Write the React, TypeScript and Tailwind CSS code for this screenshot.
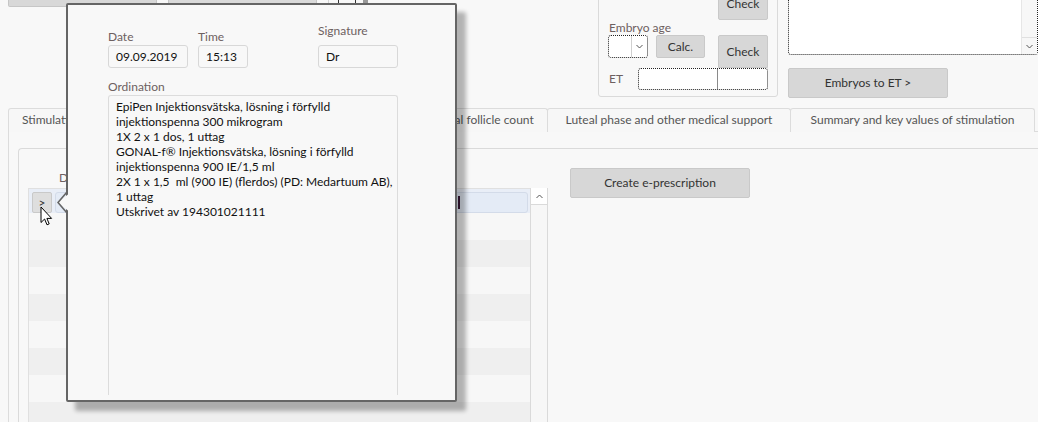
import React from "react";

const btn =
  "flex items-center justify-center bg-[#d7d7d7] border border-[#c9c9c9] rounded-[2px] text-[12px] text-[#333]";
const label = "text-[12px] text-[#6d6060] leading-[16px]";
const field =
  "h-[23px] border border-[#d8d8d8] rounded-[3px] pl-[7px] text-[12px] leading-[21px] text-[#111]";

function Chevron({ up = false }: { up?: boolean }) {
  return (
    <svg width="7" height="5" viewBox="0 0 7 5" className="text-[#555]">
      <polyline
        points={up ? "0.5,4 3.5,1 6.5,4" : "0.5,1 3.5,4 6.5,1"}
        fill="none"
        stroke="currentColor"
        strokeWidth="1"
      />
    </svg>
  );
}

function TopArea() {
  return (
    <div className="flex h-[100px]">
      {/* left toolbar stub, mostly under the popup */}
      <div className="w-[598px] flex items-start">
        <div className="ml-[8px] w-[149px] h-[7px] bg-[#d8d8d8] border border-t-0 border-[#c6c6c6] rounded-b-[2px]" />
        <div className="ml-[11px] w-[149px] h-[7px] bg-[#dadada] border border-t-0 border-[#c6c6c6] rounded-b-[2px]" />
        <div className="ml-[11px] w-px h-[10px] bg-[#d4d4d4]" />
        <div className="ml-[9px] w-px h-[4px] bg-[#333]" />
        <div className="ml-[16px] w-px h-[4px] bg-[#333]" />
        <div className="ml-[7px] w-[5px] h-[3px] bg-[#999]" />
      </div>

      {/* embryo group box */}
      <div className="-mt-[14px] w-[180px] h-[111px] border border-[#dadada] rounded-[3px] flex flex-col">
        <div className="flex justify-end pr-[9px]">
          <div className={`${btn} w-[50px] h-[33px] rounded-t-none`}>Check</div>
        </div>
        <div className={`${label} h-[15px] leading-[15px] pl-[10px]`}>Embryo age</div>
        <div className="flex h-[33px] items-start">
          <div className="ml-[9px] w-[40px] h-[23px] border border-dotted border-[#222] rounded-[3px] bg-white flex">
            <div className="w-[22px]" />
            <div className="flex-1 border-l border-[#d0d0d0] flex items-center justify-center">
              <Chevron />
            </div>
          </div>
          <div className={`${btn} ml-[8px] w-[49px] h-[23px]`}>Calc.</div>
          <div className={`${btn} ml-[13px] w-[50px] h-[33px] rounded-b-none pt-[1px]`}>Check</div>
        </div>
        <div className="flex h-[22px]">
          <div className={`${label} w-[39px] pl-[10px] leading-[22px]`}>ET</div>
          <div className="w-[130px] h-[22px] border border-dotted border-[#222] rounded-[3px] bg-white flex">
            <div className="w-[79px] border-r border-[#8a8a8a]" />
            <div className="flex-1" />
          </div>
        </div>
      </div>

      {/* right column */}
      <div className="ml-[10px] flex flex-col">
        <div className="w-[250px] h-[55px] bg-white border border-t-0 border-dotted border-[#222] rounded-b-[3px] flex">
          <div className="flex-1" />
          <div className="w-[16px] border-l border-[#e6e6e6] bg-[#f7f7f7] flex flex-col justify-end">
            <div className="h-[17px] border-t border-[#e0e0e0] flex items-center justify-center">
              <Chevron />
            </div>
          </div>
        </div>
        <div className={`${btn} mt-[13px] w-[160px] h-[30px]`}>Embryos to ET &gt;</div>
      </div>
    </div>
  );
}

const tabs = [
  { t: "Stimulation and medication", w: 180, left: true },
  { t: "Ultrasound and hormone values", w: 231 },
  { t: "Antral follicle count", w: 131 },
  { t: "Luteal phase and other medical support", w: 244 },
  { t: "Summary and key values of stimulation", w: 245 },
];

function Tabs() {
  return (
    <div className="mt-[8px] flex h-[24px] pl-[8px]">
      {tabs.map((tab, i) => (
        <div
          key={i}
          style={{ width: tab.w }}
          className={`shrink-0 border border-b-0 border-[#dcdcdc] rounded-t-[3px] bg-[#f7f7f7] text-[12px] text-[#555] leading-[22px] whitespace-nowrap overflow-hidden ${
            i > 0 ? "-ml-px" : ""
          } ${tab.left ? "pl-[13px]" : "text-center"}`}
        >
          {tab.t}
        </div>
      ))}
    </div>
  );
}

function Grid() {
  const rows = Array.from({ length: 8 });
  return (
    <div className="flex h-[234px]">
      <div className="w-[502px] border-l border-t border-[#e0e0e0] flex flex-col">
        <div className="h-[28px] bg-[#e9eef7] flex items-start">
          <div className={`${btn} mt-[3px] ml-[3px] w-[20px] h-[21px] bg-[#dedede] text-[11px]`}>&gt;</div>
          <div className="mt-[3px] ml-[3px] w-[473px] h-[21px] bg-[#e4ebf6] border border-[#d3dbe9] rounded-[3px] flex items-center">
            <div className="ml-[402px] w-[2px] h-[13px] bg-[#3b1838]" />
          </div>
        </div>
        {rows.map((_, i) => (
          <div key={i} className={`h-[27px] shrink-0 ${i % 2 === 0 ? "bg-[#f7f7f7]" : "bg-[#efefef]"}`} />
        ))}
      </div>
      <div className="w-[18px] border-x border-[#dadada] bg-[#f7f7f7]">
        <div className="h-[17px] bg-white border-b border-[#dadada] flex items-center justify-center">
          <Chevron up />
        </div>
      </div>
    </div>
  );
}

function Content() {
  return (
    <div className="-mt-px ml-[8px] h-[291px] border-t border-l border-[#dcdcdc] pl-[9px] pt-[16px]">
      <div className="h-full border-t border-l border-[#dadada] rounded-tl-[4px] flex items-start">
        <div className="ml-[9px] flex flex-col">
          <div className={`${label} mt-[21px] pl-[31px] mb-[2px]`}>Date</div>
          <Grid />
        </div>
        <div className={`${btn} ml-[22px] mt-[19px] w-[180px] h-[30px]`}>Create e-prescription</div>
      </div>
    </div>
  );
}

const lines = [
  "EpiPen Injektionsvätska, lösning i förfylld",
  "injektionspenna 300 mikrogram",
  "1X 2 x 1 dos, 1 uttag",
  "GONAL-f® Injektionsvätska, lösning i förfylld",
  "injektionspenna 900 IE/1,5 ml",
  "2X 1 x 1,5  ml (900 IE) (flerdos) (PD: Medartuum AB),",
  "1 uttag",
  "Utskrivet av 194301021111",
];

function Popup() {
  return (
    <div className="absolute left-[66px] top-[3px] w-[391px] h-[399px] border-2 border-[#656565] rounded-[2px] bg-[#f8f8f8] shadow-[9px_9px_4px_rgba(0,0,0,0.28)]">
      <svg width="14" height="22" viewBox="0 0 14 22" className="absolute left-[-11px] top-[187px]">
        <polygon points="14,0 1,10.5 14,21" fill="#f8f8f8" />
        <polyline points="10,0 1,10.5 10,21" fill="none" stroke="#656565" strokeWidth="1.6" />
      </svg>
      <div className="pl-[40px] pt-[18px] flex items-end">
        <div className="w-[80px]">
          <div className={label}>Date</div>
          <div className={field}>09.09.2019</div>
        </div>
        <div className="ml-[10px] w-[50px]">
          <div className={label}>Time</div>
          <div className={field}>15:13</div>
        </div>
        <div className="ml-[70px] w-[80px]">
          <div className={`${label} mb-[6px]`}>Signature</div>
          <div className={field}>Dr</div>
        </div>
      </div>
      <div className={`${label} mt-[11px] pl-[40px]`}>Ordination</div>
      <div className="ml-[40px] w-[290px] h-[300px] border border-b-0 border-[#dcdcdc] rounded-t-[3px] px-[7px] pt-[3px] text-[12px] leading-[15px] text-[#111]">
        {lines.map((l, i) => (
          <div key={i} className="whitespace-pre">
            {l}
          </div>
        ))}
      </div>
    </div>
  );
}

function Cursor() {
  return (
    <svg width="13" height="21" viewBox="0 0 13 21" className="absolute left-[40px] top-[206px]">
      <path
        d="M1 1 L1 16.5 L4.6 13 L7 18.8 L9.2 17.9 L6.9 12.4 L11.6 12.4 Z"
        fill="white"
        stroke="black"
        strokeWidth="1"
        strokeLinejoin="miter"
      />
    </svg>
  );
}

export default function App() {
  return (
    <div className="relative w-[1038px] h-[422px] overflow-hidden bg-[#f8f8f8] font-['Lato','Noto_Sans',sans-serif]">
      <TopArea />
      <Tabs />
      <Content />
      <Popup />
      <Cursor />
    </div>
  );
}
